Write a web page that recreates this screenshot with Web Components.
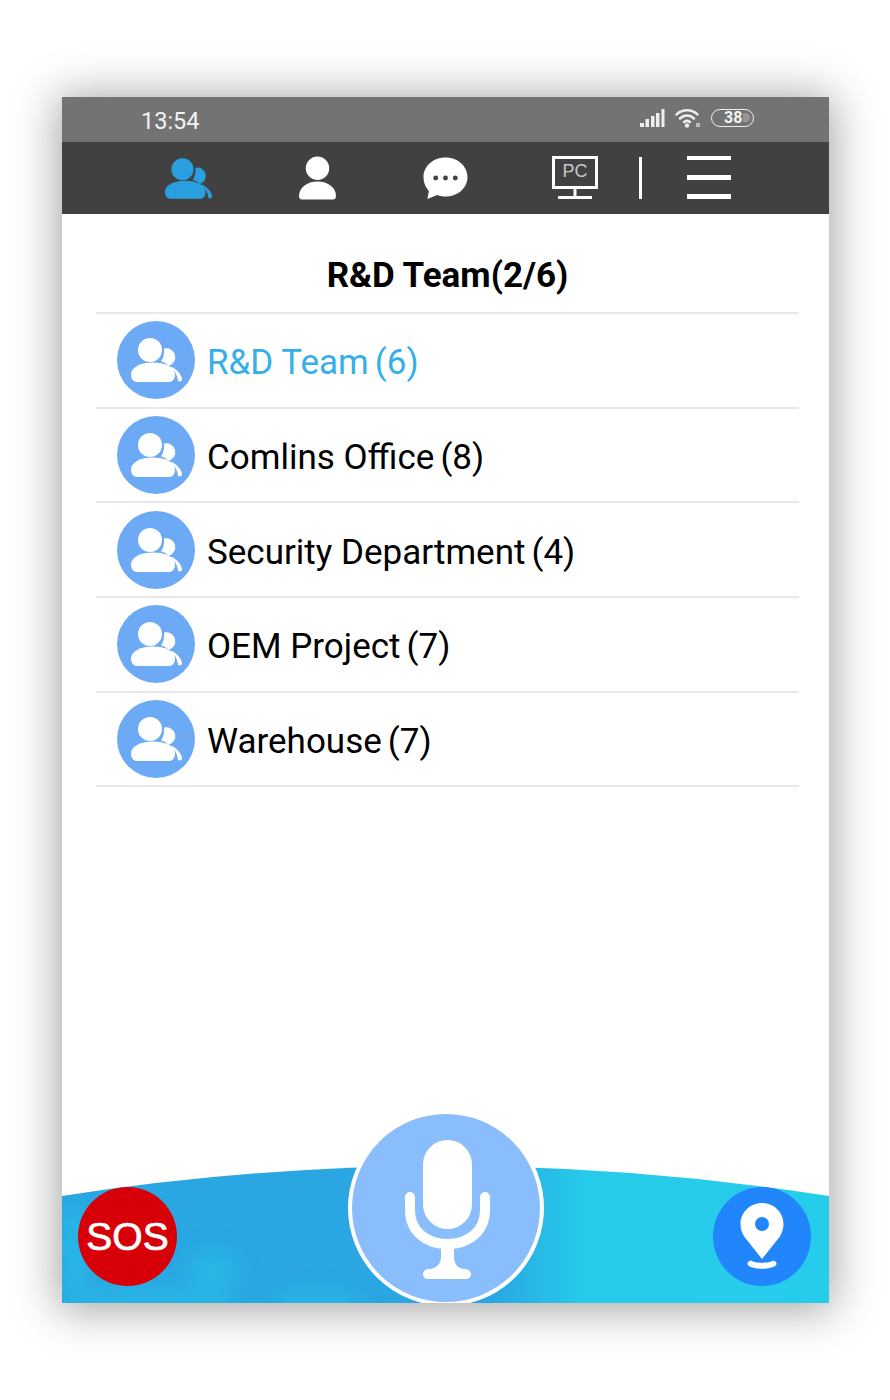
<!DOCTYPE html>
<html>
<head>
<meta charset="utf-8">
<style>
  html, body { margin: 0; padding: 0; background: #fff; }
  body { width: 890px; height: 1400px; font-family: Roboto, "Liberation Sans", sans-serif; }
</style>
</head>
<body>
<phone-frame>
  <status-bar slot="top" time="13:54"></status-bar>
  <nav-bar slot="top"></nav-bar>
  <group-list title="R&amp;D Team(2/6)">
    <group-row name="R&amp;D Team" count="6" active></group-row>
    <group-row name="Comlins Office" count="8"></group-row>
    <group-row name="Security Department" count="4"></group-row>
    <group-row name="OEM Project" count="7"></group-row>
    <group-row name="Warehouse" count="7"></group-row>
  </group-list>
  <talk-bar slot="bottom"></talk-bar>
</phone-frame>

<script>
// two people, the second one half hidden behind the first
const PEOPLE = `
  <circle cx="20" cy="13" r="12"/>
  <path d="M1 37.500C1 30 11 25.500 23 25.500S45 30 45 37.500c0 5-3 7.500-6 7.500H7c-3 0-6-2.500-6-7.500z"/>
  <path d="M34 11.500a9 9 0 0 1 4.500 17.500c-2-2.500-4.500-4-7.500-4.500 2.500-3.500 3.500-8 3-13z"/>
  <path d="M40 29.500c5 1 11 7 12 12 .5 2.500-2 3.500-4 2.500-.5-6-3.500-11-8-14.500z"/>`;

class PhoneFrame extends HTMLElement {
    constructor() {
        super();
        this.attachShadow({mode: 'open'});
        this.shadowRoot.innerHTML = `
            <style>
                :host { display: block; padding: 97px 61px 97px 62px; }
                .phone {
                    display: flex;
                    flex-direction: column;
                    height: 1206px;
                    overflow: hidden;
                    background: #fff;
                }
                .shadow { box-shadow: 0 3px 42px 4px rgba(0,0,0,.36); }
                .main { flex: 1; min-height: 0; }
            </style>
            <div class="shadow">
                <div class="phone">
                    <slot name="top"></slot>
                    <div class="main"><slot></slot></div>
                    <slot name="bottom"></slot>
                </div>
            </div>`;
    }
}

class StatusBar extends HTMLElement {
    constructor() {
        super();
        this.attachShadow({mode: 'open'});
        this.shadowRoot.innerHTML = `
            <style>
                :host {
                    display: flex;
                    align-items: center;
                    height: 45px;
                    padding: 0 75px 0 79px;
                    background: #737373;
                    color: #f2f2f2;
                    font: 400 23.500px Roboto, sans-serif;
                }
                .time { flex: 1; padding-top: 3px; }
                .icons { display: flex; align-items: center; gap: 10px; margin-top: -3px; }
                svg { display: block; }
                .batt {
                    box-sizing: border-box;
                    position: relative;
                    width: 43px;
                    height: 18px;
                    border: 1.500px solid #eee;
                    border-radius: 9px;
                    color: #f4f4f4;
                    font: 700 16px/15px Roboto, sans-serif;
                    padding-left: 12px;
                }
                .batt i {
                    position: absolute;
                    right: 3px;
                    top: 3px;
                    width: 7px;
                    height: 9px;
                    border-radius: 0 5px 5px 0;
                    background: #979797;
                }
            </style>
            <span class="time">${this.getAttribute('time')}</span>
            <div class="icons">
                <svg width="25" height="18" viewBox="0 0 25 18" fill="#eee">
                    <rect x="0" y="14" width="4" height="4"/>
                    <rect x="5.500" y="10" width="3.500" height="8"/>
                    <rect x="11" y="7" width="3.500" height="11"/>
                    <rect x="16" y="4" width="3.500" height="14"/>
                    <rect x="21.500" y="0" width="3" height="18"/>
                </svg>
                <svg width="26" height="20" viewBox="0 0 26 20" fill="none" stroke="#eee" stroke-width="2.500" stroke-linecap="round">
                    <path d="M1.500 6.500C7 .8 17 .8 22.500 6.500"/>
                    <path d="M5 10.500C9 6.500 15 6.500 19 10.500"/>
                    <path d="M9 14c2-1.500 4-1.500 6 0"/>
                    <circle cx="12" cy="17.500" r="1" fill="#eee"/>
                    <rect x="21" y="15" width="4" height="4" fill="#bbb" stroke="none"/>
                </svg>
                <div class="batt">38<i></i></div>
            </div>`;
    }
}

class NavBar extends HTMLElement {
    constructor() {
        super();
        this.attachShadow({mode: 'open'});
        this.shadowRoot.innerHTML = `
            <style>
                :host {
                    display: flex;
                    align-items: center;
                    height: 72px;
                    background: #414141;
                }
                svg { display: block; flex: none; }
                .people { margin-left: 102px; }
                .person { margin-left: 87px; }
                .chat { margin-left: 87px; }
                .pc { position: relative; flex: none; width: 46px; height: 44px; margin-left: 84px; }
                .pc span {
                    position: absolute;
                    left: 3px;
                    top: 5px;
                    width: 40px;
                    text-align: center;
                    color: #c8c8c8;
                    font: 400 18px/20px "Liberation Sans", sans-serif;
                }
                .sep { flex: none; width: 3px; height: 42px; margin-left: 41px; background: #fff; }
                .burger { margin-left: 45px; }
            </style>
            <svg class="people" width="48" height="43" viewBox="0 0 52 46" fill="#2a9fe0">${PEOPLE}</svg>
            <svg class="person" width="37" height="44" viewBox="0 0 38 44" fill="#fff">
                <circle cx="19" cy="12" r="12"/>
                <path d="M3 44c-2 0-3-1.500-3-3.500C0 32 8 25.500 19 25.500S38 32 38 40.500c0 2-1 3.500-3 3.500z"/>
            </svg>
            <svg class="chat" width="45" height="44" viewBox="0 0 46 44" fill="#fff">
                <path d="M23 1c12.500 0 22.500 8.800 22.500 20S35.500 41 23 41c-3 0-6-.5-8.500-1.500L4.500 43.500l1.500-8C2.500 31.500.5 26.500.5 21 .5 9.800 10.500 1 23 1z"/>
                <circle cx="13" cy="22" r="2.500" fill="#414141"/>
                <circle cx="23" cy="22" r="2.500" fill="#414141"/>
                <circle cx="33" cy="22" r="2.500" fill="#414141"/>
            </svg>
            <div class="pc">
                <svg width="46" height="44" viewBox="0 0 46 44" fill="none" stroke="#fff" stroke-width="3">
                    <rect x="1.500" y="1.500" width="43" height="30"/>
                    <path d="M23 32v8M6 41.500h34"/>
                </svg>
                <span>PC</span>
            </div>
            <span class="sep"></span>
            <svg class="burger" width="44" height="44" viewBox="0 0 44 44" fill="#fff">
                <rect x="0" y="0" width="44" height="4"/>
                <rect x="0" y="19" width="44" height="5"/>
                <rect x="0" y="38" width="44" height="5"/>
            </svg>`;
    }
}

class GroupList extends HTMLElement {
    constructor() {
        super();
        this.attachShadow({mode: 'open'});
        this.shadowRoot.innerHTML = `
            <style>
                :host { display: block; padding: 0 30px 0 34px; }
                h1 {
                    margin: 0;
                    box-sizing: border-box;
                    height: 100px;
                    border-bottom: 2px solid #e8e8e8;
                    text-align: center;
                    font: 700 35px/124px Roboto, sans-serif;
                    color: #000;
                }
            </style>
            <h1>${this.getAttribute('title').replace('&', '&amp;')}</h1>
            <slot></slot>`;
    }
}

class GroupRow extends HTMLElement {
    constructor() {
        super();
        this.attachShadow({mode: 'open'});
        const name = this.getAttribute('name').replace('&', '&amp;');
        const color = this.hasAttribute('active') ? '#36aeea' : '#000';
        this.shadowRoot.innerHTML = `
            <style>
                :host {
                    display: flex;
                    align-items: center;
                    box-sizing: border-box;
                    height: 94.700px;
                    padding-left: 21px;
                    border-bottom: 2px solid #e8e8e8;
                }
                .avatar {
                    flex: none;
                    display: flex;
                    align-items: center;
                    justify-content: center;
                    width: 78px;
                    height: 78px;
                    border-radius: 50%;
                    background: #6daaf5;
                }
                .label {
                    margin-left: 12px;
                    padding-top: 6px;
                    color: ${color};
                    font: 400 35px/40px Roboto, sans-serif;
                    white-space: nowrap;
                }
                .count { margin-left: 6px; }
            </style>
            <div class="avatar">
                <svg width="52" height="46" viewBox="0 0 52 46" fill="#fff">${PEOPLE}</svg>
            </div>
            <div class="label">${name}<span class="count">(${this.getAttribute('count')})</span></div>`;
    }
}

class TalkBar extends HTMLElement {
    constructor() {
        super();
        this.attachShadow({mode: 'open'});
        this.shadowRoot.innerHTML = `
            <style>
                :host {
                    display: flex;
                    position: relative;
                    align-items: flex-start;
                    justify-content: space-between;
                    box-sizing: border-box;
                    height: 188px;
                    padding: 72px 18px 0 16px;
                }
                .wave { position: absolute; left: 0; top: 0; }
                .sos, .pin {
                    position: relative;
                    display: flex;
                    align-items: center;
                    justify-content: center;
                    height: 99px;
                    border-radius: 50%;
                }
                .sos {
                    width: 99px;
                    background: #d80008;
                    color: #fff;
                    font: 400 39px/1 "Liberation Sans", sans-serif;
                    -webkit-text-stroke: .7px #fff;
                }
                .pin { width: 98px; background: #2185fb; }
                .mic {
                    position: absolute;
                    left: 286px;
                    top: -5px;
                    box-sizing: border-box;
                    width: 196px;
                    height: 196px;
                    display: flex;
                    justify-content: center;
                    padding-top: 26px;
                    border-radius: 50%;
                    border: 4.500px solid #fff;
                    background: #8abdfb;
                }
            </style>
            <svg class="wave" width="767" height="188" viewBox="0 0 767 188">
                <defs>
                    <linearGradient id="sea" x1="0" x2="1" y1="0" y2="0">
                        <stop offset="0" stop-color="#2aa6e2"/>
                        <stop offset=".56" stop-color="#2aa6e2"/>
                        <stop offset=".68" stop-color="#26cbea"/>
                        <stop offset="1" stop-color="#26cdea"/>
                    </linearGradient>
                    <filter id="soft" x="-40%" y="-40%" width="180%" height="180%">
                        <feGaussianBlur stdDeviation="11"/>
                    </filter>
                    <clipPath id="shape"><path d="M0 81Q383.500 21 767 81V188H0z"/></clipPath>
                </defs>
                <path d="M0 81Q383.500 21 767 81V188H0z" fill="url(#sea)"/>
                <g clip-path="url(#shape)">
                    <g filter="url(#soft)" fill="#25bfe6" opacity=".7">
                        <ellipse cx="12" cy="135" rx="16" ry="45"/>
                        <ellipse cx="90" cy="190" rx="90" ry="16"/>
                        <ellipse cx="150" cy="155" rx="26" ry="22"/>
                        <ellipse cx="255" cy="190" rx="45" ry="14"/>
                    </g>
                </g>
            </svg>
            <div class="sos">SOS</div>
            <div class="mic">
                <svg width="92" height="140" viewBox="0 0 92 140">
                    <rect x="23" y="0" width="49" height="89" rx="24.500" fill="#fff"/>
                    <path d="M10 57v13c0 21 16 34 37.500 34S85 91 85 70V57" fill="none" stroke="#fff" stroke-width="10" stroke-linecap="round"/>
                    <path d="M41 106h13v11c0 7 4 12 11 12 3 0 6 2 6 5s-2 5-5 5H28c-3 0-5-2-5-5s3-5 6-5c7 0 12-5 12-12z" fill="#fff"/>
                </svg>
            </div>
            <div class="pin">
                <svg width="44" height="68" viewBox="0 0 44 68" fill="#fff">
                    <path fill-rule="evenodd" d="M22 0c12 0 21.500 9.500 21.500 21 0 5-1.500 9-4 13L22 56 4.500 34C2 30 .5 26 .5 21 .5 9.500 10 0 22 0zm0 14a7 7 0 1 0 0 14 7 7 0 0 0 0-14z"/>
                    <path d="M11 57.500c3 3 19 3 22 0 3 .5 4.500 3 3 4.500-4 5-24 5-28 0-1.500-1.500 0-4 3-4.500z"/>
                </svg>
            </div>`;
    }
}

customElements.define('phone-frame', PhoneFrame);
customElements.define('status-bar', StatusBar);
customElements.define('nav-bar', NavBar);
customElements.define('group-list', GroupList);
customElements.define('group-row', GroupRow);
customElements.define('talk-bar', TalkBar);
</script>
</body>
</html>
